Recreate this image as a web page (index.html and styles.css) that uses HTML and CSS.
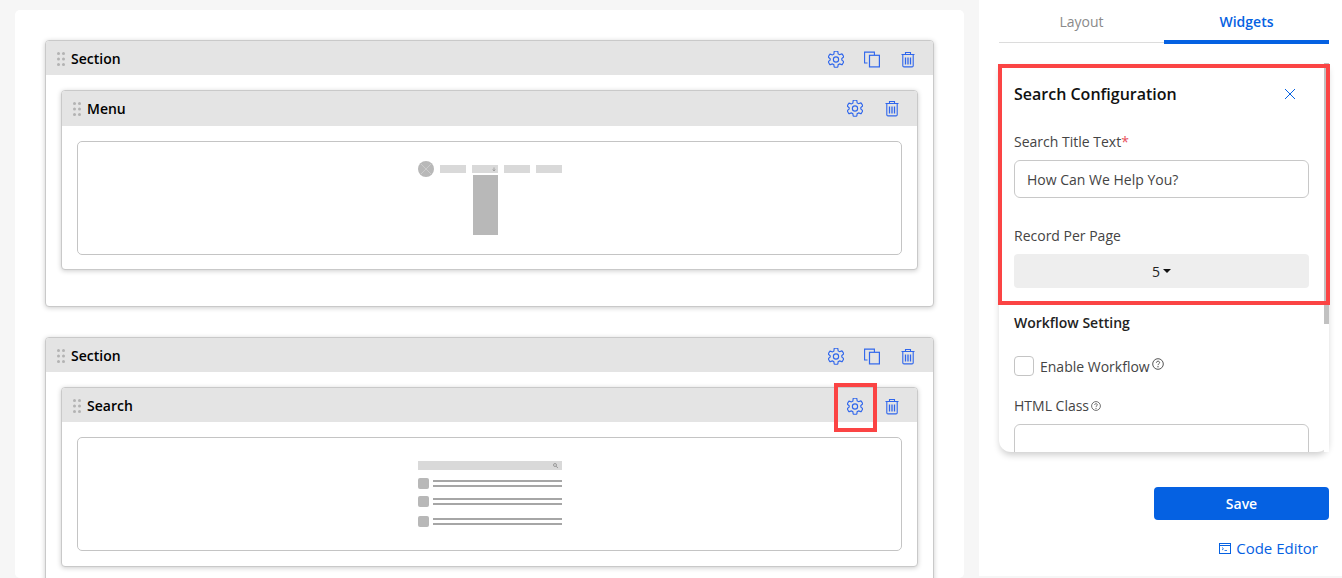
FILE: index.html
```html
<!DOCTYPE html>
<html lang="en">
<head>
    <meta charset="UTF-8">
    <meta name="viewport" content="width=device-width, initial-scale=1.0">
    <title>Page Builder</title>
    <link rel="stylesheet" href="styles.css">
</head>
<body>

<!-- Shared icons -->
<svg class="icon-defs" width="0" height="0" aria-hidden="true">
    <symbol id="icon-gear" viewBox="1 .6 14 14.800">
        <path d="M6.400 1.200c0-.2.200-.4.400-.4h2.400c.2 0 .4.200.4.400l.3 1.900 1.300.7 1.800-.7c.2-.1.400 0 .5.200l1.200 2.100c.1.200.1.400-.1.500l-1.500 1.200v1.400l1.500 1.200c.2.100.2.300.1.500l-1.200 2.100c-.1.200-.3.300-.5.200l-1.800-.7-1.300.7-.3 1.900c0 .2-.2.400-.4.400H6.800c-.2 0-.4-.2-.4-.4l-.3-1.900-1.300-.7-1.800.7c-.2.100-.4 0-.5-.2l-1.200-2.100c-.1-.2-.1-.4.100-.5l1.500-1.200V7.300L1.400 6.100c-.2-.1-.2-.3-.1-.5l1.200-2.100c.1-.2.300-.3.500-.2l1.800.7 1.300-.7z" fill="none" stroke="currentColor" stroke-width="1"/>
        <circle cx="8" cy="8" r="2.300" fill="none" stroke="currentColor" stroke-width="1"/>
    </symbol>
    <symbol id="icon-copy" viewBox="0 0 16 16">
        <path d="M3.500 11.500H.6V.6h9.800v2.900" fill="none" stroke="currentColor" stroke-width="1.100"/>
        <rect x="5.500" y="3.800" width="9.900" height="11.600" fill="none" stroke="currentColor" stroke-width="1.200"/>
    </symbol>
    <symbol id="icon-trash" viewBox="0 0 16 16">
        <path d="M1.500 3h13M5.500 3V1h5v2M2.800 3v11.200c0 .7.500 1.200 1.200 1.200h8c.7 0 1.200-.5 1.200-1.200V3" fill="none" stroke="currentColor" stroke-width="1.100"/>
        <path d="M5.500 6v7M8 6v7M10.500 6v7" fill="none" stroke="currentColor" stroke-width="1.300"/>
    </symbol>
    <symbol id="icon-grip" viewBox="0 0 8 14">
        <g fill="#b3b3b3">
            <circle cx="1.500" cy="1.500" r="1.500"/><circle cx="6.500" cy="1.500" r="1.500"/>
            <circle cx="1.500" cy="7" r="1.500"/><circle cx="6.500" cy="7" r="1.500"/>
            <circle cx="1.500" cy="12.500" r="1.500"/><circle cx="6.500" cy="12.500" r="1.500"/>
        </g>
    </symbol>
    <symbol id="icon-help" viewBox="0 0 12 12">
        <circle cx="6" cy="6" r="5.300" fill="none" stroke="currentColor"/>
        <path d="M4.400 4.700c0-2 3.200-2 3.200-.1 0 1.200-1.600 1.200-1.600 2.500" fill="none" stroke="currentColor"/>
        <circle cx="6" cy="8.800" r=".7" fill="currentColor"/>
    </symbol>
</svg>

<main class="canvas">

    <!-- Section with menu widget -->
    <section class="block section-block">
        <header class="block-head">
            <svg class="grip"><use href="#icon-grip"/></svg>
            <span class="block-title">Section</span>
            <div class="block-actions">
                <svg class="action"><use href="#icon-gear"/></svg>
                <svg class="action"><use href="#icon-copy"/></svg>
                <svg class="action"><use href="#icon-trash"/></svg>
            </div>
        </header>
        <div class="section-body">
            <div class="block widget-block">
                <header class="block-head menu-head">
                    <svg class="grip"><use href="#icon-grip"/></svg>
                    <span class="block-title">Menu</span>
                    <div class="block-actions">
                        <svg class="action"><use href="#icon-gear"/></svg>
                        <svg class="action"><use href="#icon-trash"/></svg>
                    </div>
                </header>
                <div class="widget-body">
                    <div class="preview">
                        <svg class="thumb-menu" width="144" height="76" viewBox="0 0 144 76">
                            <circle cx="8" cy="9" r="8" fill="#b8b8b8"/>
                            <path d="M3 4l10 10M13 4L3 14" stroke="#cfcfcf" stroke-width=".8"/>
                            <rect x="22" y="5" width="26" height="8" fill="#d9d9d9"/>
                            <rect x="54" y="5" width="26" height="8" fill="#d9d9d9"/>
                            <rect x="86" y="5" width="26" height="8" fill="#d9d9d9"/>
                            <rect x="118" y="5" width="26" height="8" fill="#d9d9d9"/>
                            <path d="M76 7.500v3M74.700 9.500L76 11l1.300-1.500" fill="none" stroke="#8c8c8c" stroke-width=".7"/>
                            <rect x="55" y="15" width="25" height="60" fill="#b8b8b8"/>
                        </svg>
                    </div>
                </div>
            </div>
        </div>
    </section>

    <!-- Section with search widget -->
    <section class="block section-block">
        <header class="block-head">
            <svg class="grip"><use href="#icon-grip"/></svg>
            <span class="block-title">Section</span>
            <div class="block-actions">
                <svg class="action"><use href="#icon-gear"/></svg>
                <svg class="action"><use href="#icon-copy"/></svg>
                <svg class="action"><use href="#icon-trash"/></svg>
            </div>
        </header>
        <div class="section-body">
            <div class="block widget-block">
                <header class="block-head">
                    <svg class="grip"><use href="#icon-grip"/></svg>
                    <span class="block-title">Search</span>
                    <div class="block-actions">
                        <span class="gear-wrap">
                            <svg class="action"><use href="#icon-gear"/></svg>
                            <span class="marker marker-gear"></span>
                        </span>
                        <svg class="action"><use href="#icon-trash"/></svg>
                    </div>
                </header>
                <div class="widget-body">
                    <div class="preview">
                        <svg class="thumb-search" width="144" height="66" viewBox="0 0 144 66">
                            <rect width="144" height="9" fill="#d9d9d9"/>
                            <circle cx="137" cy="4" r="1.500" fill="none" stroke="#8c8c8c" stroke-width=".8"/>
                            <path d="M138 5.200l2 1.800" stroke="#8c8c8c" stroke-width=".8"/>
                            <g fill="#b8b8b8">
                                <rect y="17" width="11" height="11" rx="2"/>
                                <rect y="35" width="11" height="11" rx="2"/>
                                <rect y="55" width="11" height="11" rx="2"/>
                            </g>
                            <g fill="#a6a6a6">
                                <rect x="15" y="19" width="129" height="2"/>
                                <rect x="15" y="24" width="129" height="2"/>
                                <rect x="15" y="37" width="129" height="2"/>
                                <rect x="15" y="42" width="129" height="2"/>
                                <rect x="15" y="57" width="129" height="2"/>
                                <rect x="15" y="62" width="129" height="2"/>
                            </g>
                        </svg>
                    </div>
                </div>
            </div>
        </div>
    </section>

</main>

<aside class="sidebar">
    <nav class="tabs">
        <div class="tab">Layout</div>
        <div class="tab tab-active">Widgets</div>
    </nav>

    <div class="config-wrap">
        <div class="config">
            <div class="config-head">
                <h3 class="config-title">Search Configuration</h3>
                <svg class="config-close" width="12" height="12" viewBox="0 0 12 12">
                    <path d="M1 1l10 10M11 1L1 11" stroke="#0561e2" stroke-width="1"/>
                </svg>
            </div>

            <label class="field-label">Search Title Text<span class="required">*</span></label>
            <input class="field-input" type="text" value="How Can We Help You?">

            <label class="field-label record-label">Record Per Page</label>
            <div class="field-select">5<span class="caret"></span></div>

            <h4 class="group-title">Workflow Setting</h4>

            <div class="check-row">
                <span class="checkbox"></span>
                <span class="check-label">Enable Workflow</span>
                <svg class="help help-lg"><use href="#icon-help"/></svg>
            </div>

            <label class="field-label class-label">HTML Class<svg class="help"><use href="#icon-help"/></svg></label>
            <input class="field-input" type="text">
        </div>
        <div class="scroll-track"><span class="scroll-thumb"></span></div>
        <span class="marker marker-config"></span>
    </div>

    <div class="sidebar-foot">
        <button class="save-btn" type="button">Save</button>
        <a class="code-link">
            <svg width="12" height="11" viewBox="0 0 12 11">
                <rect x=".5" y=".5" width="11" height="10" fill="none" stroke="#0561e2"/>
                <path d="M1 2.500h10" stroke="#0561e2"/>
                <path d="M3 4.500l1.500 1.300L3 7M5.500 7.500h2.500" fill="none" stroke="#0561e2" stroke-width=".8"/>
            </svg>
            Code Editor
        </a>
    </div>
</aside>

</body>
</html>
```

FILE: styles.css
```css
* {
    box-sizing: border-box;
}
html, body {
    height: 578px;
    overflow: hidden;
}
body {
    margin: 0;
    display: flex;
    align-items: flex-start;
    background-color: #f6f6f6;
    font-family: "Open Sans", "Noto Sans", Arial, sans-serif;
    font-size: 14px;
    color: #333;
}
.icon-defs {
    position: absolute;
}

/* Canvas */
.canvas {
    width: 949px;
    height: 568px;
    overflow: hidden;
    margin: 10px 15px 0 15px;
    padding: 30px 30px 0 30px;
    background-color: #fff;
    border-radius: 5px;
    flex-shrink: 0;
}
.block {
    background-color: #fff;
    border: 1px solid #c9c9c9;
    border-radius: 4px;
    box-shadow: 0 1px 5px rgba(0, 0, 0, 0.2);
}
.section-block {
    height: 267px;
    margin-bottom: 30px;
}
.block-head {
    height: 34px;
    display: flex;
    align-items: center;
    padding: 2px 0 0 11px;
    background-color: #e4e4e4;
    border-radius: 3px 3px 0 0;
}
.menu-head {
    height: 35px;
    padding-top: 0;
}
.grip {
    width: 8px;
    height: 14px;
    margin-right: 6px;
}
.block-title {
    font-weight: 600;
    color: #000;
    line-height: 20px;
}
.block-actions {
    margin-left: auto;
    display: flex;
    align-items: center;
    gap: 20px;
    padding-right: 17px;
}
.action {
    display: block;
    width: 16px;
    height: 17px;
    color: #2f66ec;
}
.gear-wrap {
    position: relative;
    display: block;
}
.section-body {
    padding: 15px 15px 0 15px;
}
.widget-block {
    height: 180px;
}
.widget-block .block-actions {
    gap: 21px;
    padding-right: 17px;
}
.widget-body {
    padding: 15px 15px 0 15px;
}
.preview {
    height: 114px;
    display: flex;
    align-items: center;
    justify-content: center;
    border: 1px solid #c4c4c4;
    border-radius: 5px;
}

/* Sidebar */
.sidebar {
    width: 363px;
    height: 576px;
    padding: 0 13px 0 20px;
    background-color: #fff;
    flex-shrink: 0;
}
.tabs {
    display: flex;
    height: 44px;
}
.tab {
    width: 165px;
    padding-top: 12px;
    text-align: center;
    line-height: 20px;
    color: #8a8a8a;
    border-bottom: 1px solid #dcdcdc;
    height: 43px;
}
.tab-active {
    height: 44px;
    color: #0561e2;
    font-weight: 600;
    border-bottom: 4px solid #0561e2;
}
.config-wrap {
    position: relative;
    margin-top: 20px;
    height: 388px;
}
.config {
    height: 388px;
    padding: 0 20px 0 15px;
    overflow: hidden;
    background-color: #fff;
    border-radius: 0 0 12px 12px;
    box-shadow: 0 4px 7px -1px rgba(0, 0, 0, 0.2);
}
.config-head {
    display: flex;
    align-items: center;
    justify-content: space-between;
    height: 24px;
    margin: 18px 0 26px 0;
    padding-right: 13px;
}
.config-title {
    margin: 0;
    font-size: 16px;
    font-weight: 600;
    color: #111;
}
.config-close {
    display: block;
}
.field-label {
    display: block;
    line-height: 20px;
    margin-bottom: 8px;
    color: #444;
}
.required {
    color: #e8505b;
}
.field-input {
    display: block;
    width: 100%;
    height: 38px;
    padding: 0 12px;
    border: 1px solid #c8c8c8;
    border-radius: 6px;
    font-family: inherit;
    font-size: 14px;
    color: #444;
    background-color: #fff;
}
.record-label {
    margin-top: 28px;
}
.field-select {
    height: 34px;
    display: flex;
    align-items: center;
    justify-content: center;
    gap: 3px;
    background-color: #eee;
    border-radius: 4px;
    color: #222;
}
.caret {
    width: 0;
    height: 0;
    border-left: 4px solid transparent;
    border-right: 4px solid transparent;
    border-top: 4px solid #111;
}
.group-title {
    margin: 25px 0 0 0;
    font-size: 14px;
    line-height: 20px;
    font-weight: 600;
    color: #222;
}
.check-row {
    display: flex;
    align-items: center;
    margin-top: 23px;
    height: 20px;
}
.checkbox {
    width: 20px;
    height: 20px;
    margin-right: 6px;
    border: 1px solid #c4c4c4;
    border-radius: 4px;
}
.check-label {
    color: #444;
}
.help {
    width: 10px;
    height: 10px;
    margin-left: 2px;
    color: #555;
}
.help-lg {
    width: 12px;
    height: 12px;
    margin-left: 2px;
    margin-bottom: 4px;
}
.class-label {
    margin-top: 20px;
}
.scroll-track {
    position: absolute;
    top: -1px;
    bottom: 0;
    right: 0;
    width: 5px;
    background-color: #fff;
}
.scroll-thumb {
    display: block;
    height: 261px;
    background-color: #c1c1c1;
}

/* Red annotation boxes */
.marker {
    position: absolute;
    border: 4px solid #fb4444;
    pointer-events: none;
}
.marker-config {
    top: 0;
    left: -1px;
    width: 332px;
    height: 241px;
}
.marker-gear {
    top: -15px;
    left: -13px;
    width: 43px;
    height: 49px;
}

.sidebar-foot {
    display: flex;
    flex-direction: column;
    align-items: flex-end;
    padding-top: 35px;
}
.save-btn {
    width: 175px;
    height: 33px;
    border: none;
    border-radius: 4px;
    background-color: #0561e2;
    color: #fff;
    font-family: inherit;
    font-size: 14px;
    font-weight: 600;
}
.code-link {
    display: flex;
    align-items: center;
    gap: 5px;
    margin-top: 18px;
    padding-right: 11px;
    font-size: 15px;
    line-height: 20px;
    font-weight: 500;
    color: #0561e2;
}
```
